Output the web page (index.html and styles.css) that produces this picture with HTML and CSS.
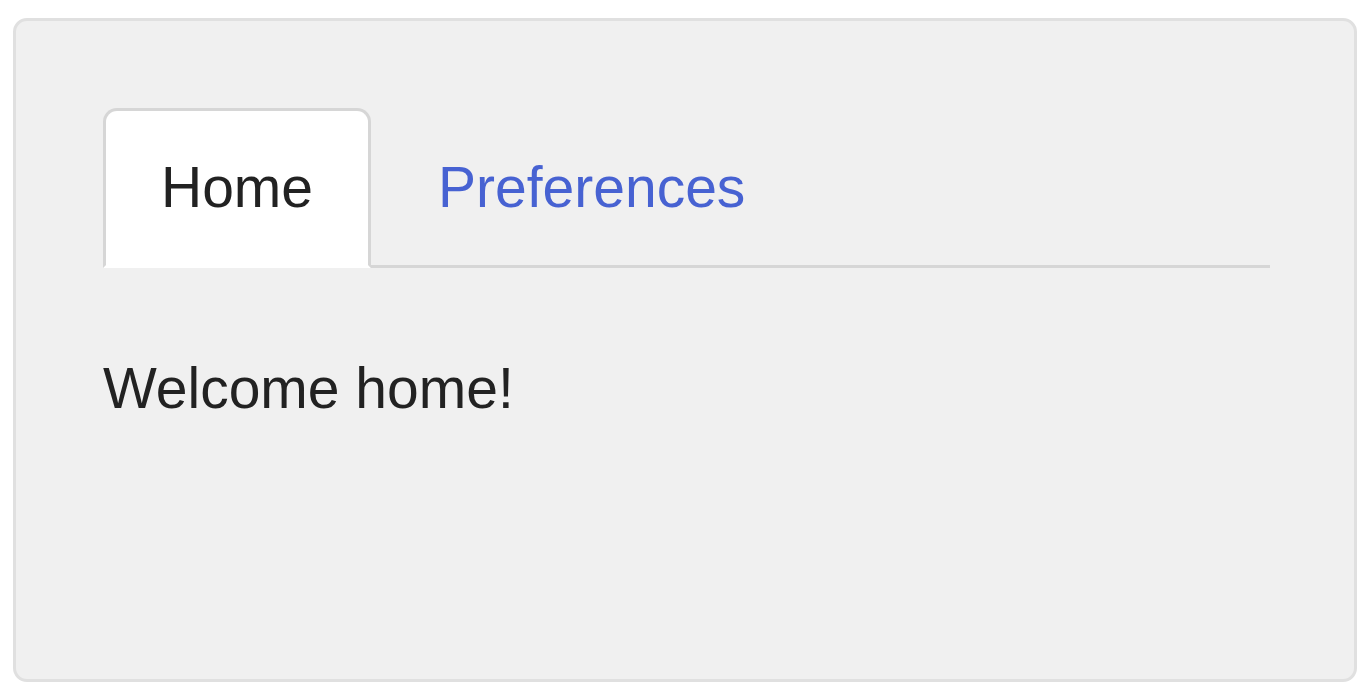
FILE: index.html
```html
<!DOCTYPE html>
<html>
<head>
<meta charset="utf-8">
<link rel="stylesheet" href="styles.css">
</head>
<body>
<div class="well">
  <ul class="tabs">
    <li class="tab active"><a href="#">Home</a></li>
    <li class="tab"><a href="#" class="link">Preferences</a></li>
  </ul>
  <p class="content">Welcome home!</p>
</div>
</body>
</html>
```

FILE: styles.css
```css
html, body {
  margin: 0;
  padding: 0;
  background: #ffffff;
}
body {
  font-family: "Liberation Sans", Arial, sans-serif;
  font-size: 57px;
  color: #222222;
}
.well {
  box-sizing: border-box;
  margin: 18px 15px 0 13px;
  height: 664px;
  background: #f0f0f0;
  border: 3px solid #e0e0e0;
  border-radius: 14px;
  padding: 87px 84px 0 87px;
}
.tabs {
  list-style: none;
  margin: 0;
  padding: 0;
  display: flex;
  gap: 9px;
  border-bottom: 3px solid #d6d6d6;
}
.tab {
  margin-bottom: -3px;
}
.tab a {
  display: block;
  padding: 44px 55px 45px 55px;
  line-height: 65px;
  border: 3px solid transparent;
  border-radius: 14px 14px 0 0;
  text-decoration: none;
  color: #222222;
}
.tab.active a {
  background: #ffffff;
  border-color: #d6d6d6;
  border-bottom-color: transparent;
}
.tab a.link {
  color: #4762d2;
}
.content {
  margin: 88px 0 0 0;
  line-height: 65px;
}
```
